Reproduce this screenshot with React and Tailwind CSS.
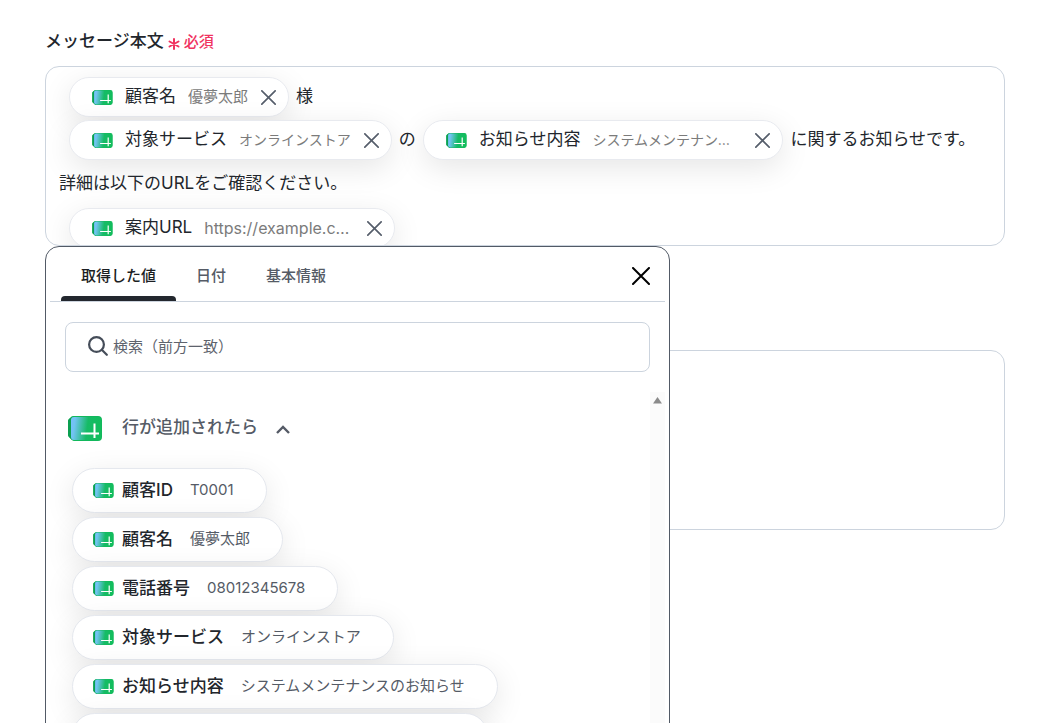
import { useState } from 'react';

const tabs = ['取得した値', '日付', '基本情報'];

const values = [
  { label: '顧客ID', value: 'T0001' },
  { label: '顧客名', value: '優夢太郎' },
  { label: '電話番号', value: '08012345678' },
  { label: '対象サービス', value: 'オンラインストア' },
  { label: 'お知らせ内容', value: 'システムメンテナンスのお知らせ' },
  { label: '案内URL', value: 'https://example.com/support/news' }
];

function SheetIcon({ className }) {
  return (
    <svg viewBox="0 0 34 25" className={`shrink-0 ${className}`} aria-hidden="true">
      <defs>
        <linearGradient id="sheet" x1="0" x2="1" y1="0" y2="0.1">
          <stop offset="0" stopColor="#78c0ff" />
          <stop offset="0.15" stopColor="#70c4f0" />
          <stop offset="0.58" stopColor="#16bb66" />
          <stop offset="1" stopColor="#12bd5c" />
        </linearGradient>
      </defs>
      <path d="M5 0h25a4 4 0 0 1 4 4v17a4 4 0 0 1-4 4H6a3 3 0 0 1-2-1l-3-3a3 3 0 0 1-1-2V5a3 3 0 0 1 1-2l2-2a3 3 0 0 1 2-1z" fill="#12b85c" />
      <path d="M4 1v23l-3-3a3 3 0 0 1-1-2V5a3 3 0 0 1 1-2z" fill="#0b9f50" />
      <path d="M6 1h24a3 3 0 0 1 3 3v17a3 3 0 0 1-3 3H6a3 3 0 0 1-3-3V4a3 3 0 0 1 3-3z" fill="url(#sheet)" />
      <path d="M13 17.5h18M26.500 7.500v14.500" stroke="#fff" strokeWidth="2" fill="none" />
    </svg>
  );
}

function CloseIcon({ className }) {
  return (
    <svg viewBox="0 0 18 18" className={className} fill="none" stroke="currentColor" strokeWidth="2" strokeLinecap="round" aria-hidden="true">
      <path d="M1 1l16 16M17 1L1 17" />
    </svg>
  );
}

function Token({ label, value, size = 'text-[15px]' }) {
  return (
    <span className="inline-flex h-10 shrink-0 items-center rounded-full border border-[#e8eaef] bg-white pr-3 pl-[22px] shadow-[0_8px_30px_rgba(0,0,0,0.1)]">
      <SheetIcon className="mr-3 h-[15px] w-[21px]" />
      <span className="mr-3 text-[17px]">{label}</span>
      <span className={`max-w-[150px] truncate text-[#7b7b7b] ${size}`}>{value}</span>
      <button type="button" aria-label={`${label}を削除`} className="ml-[13px] text-[#565e6b]">
        <CloseIcon className="h-[15px] w-[15px]" />
      </button>
    </span>
  );
}

function ValueChip({ label, value }) {
  return (
    <button
      type="button"
      className="flex h-[45px] items-center rounded-full border border-[#e5e8ee] bg-white pr-8 pl-5 shadow-[0_8px_30px_rgba(0,0,0,0.1)]"
    >
      <SheetIcon className="mr-2 h-[15px] w-[21px]" />
      <span className="mr-[17px] text-[17px] font-medium text-[#22262c]">{label}</span>
      <span className="text-[15px] text-[#555b66]">{value}</span>
    </button>
  );
}

function ValuePicker() {
  const [active, setActive] = useState(tabs[0]);
  const [open, setOpen] = useState(true);

  return (
    <div className="absolute top-full left-0 flex h-[640px] w-[625px] max-w-full flex-col rounded-[14px] border border-[#525a66] bg-white px-1">
      <div className="flex h-[55px] shrink-0 items-stretch border-b border-[#ccd4de] px-[11px]" role="tablist">
        {tabs.map((tab) => (
          <button
            key={tab}
            type="button"
            role="tab"
            aria-selected={tab === active}
            onClick={() => setActive(tab)}
            className={`relative px-5 pt-1 text-[15px] font-medium ${tab === active ? 'text-[#1b1e23]' : 'text-[#555b66]'}`}
          >
            {tab}
            {tab === active ? <span className="absolute inset-x-0 bottom-0 h-[5px] rounded-t-[4px] bg-[#23272e]" /> : null}
          </button>
        ))}
        <button type="button" aria-label="閉じる" className="mt-1 ml-auto px-1 text-black">
          <CloseIcon className="h-[18px] w-[18px]" />
        </button>
      </div>

      <label className="mx-[15px] mt-5 flex h-[50px] shrink-0 items-center rounded-lg border border-[#ccd4de] pl-[22px]">
        <svg viewBox="0 0 20 20" className="mr-[5px] mb-0.5 h-5 w-5 shrink-0" fill="none" stroke="#454d59" strokeWidth="2.200" strokeLinecap="round" aria-hidden="true">
          <circle cx="8.500" cy="8.500" r="7.400" />
          <path d="M14 14l4.800 4.800" />
        </svg>
        <input
          type="text"
          aria-label="検索"
          placeholder="検索（前方一致）"
          className="min-w-0 flex-1 text-[15px] outline-none placeholder:text-[#5e636d]"
        />
      </label>

      <div className="mt-5 flex min-h-0 flex-1">
        <div className="min-w-0 flex-1 overflow-hidden pt-[18px] pl-[18px]">
          <button type="button" onClick={() => setOpen(!open)} className="flex h-9 items-center text-[#555b66]">
            <SheetIcon className="mr-5 h-[25px] w-[34px]" />
            <span className="text-[17px] font-medium">行が追加されたら</span>
            <svg viewBox="0 0 14 9" className={`mt-0.5 ml-[18px] h-[9px] w-[14px] ${open ? '' : 'rotate-180'}`} fill="none" stroke="currentColor" strokeWidth="2.400" aria-hidden="true">
              <path d="M1 8l6-6 6 6" />
            </svg>
          </button>
          {open ? (
            <div className="mt-[22px] flex flex-col items-start gap-1 pl-1">
              {values.map((item) => (
                <ValueChip key={item.label} {...item} />
              ))}
            </div>
          ) : null}
        </div>
        <div className="w-[15px] bg-[#fbfbfb] pt-[5px]" aria-hidden="true">
          <svg viewBox="0 0 9 7" className="mx-auto h-[7px] w-[9px]" fill="#8b8b8b">
            <path d="M4.500 0L9 6.500H0z" />
          </svg>
        </div>
      </div>
    </div>
  );
}

export default function App() {
  return (
    <main className="h-screen overflow-hidden bg-white pt-7 pr-[53px] pl-[45px] font-['Inter','Noto_Sans_CJK_JP',sans-serif] text-[#22262c]">
      <div className="flex h-7 items-center">
        <span id="message-label" className="text-[17px] font-medium">メッセージ本文</span>
        <svg viewBox="0 0 12 12" className="mx-1 mt-1 h-3 w-3" stroke="#f0335f" strokeWidth="2" strokeLinecap="round" aria-hidden="true">
          <path d="M6 1v10M1.500 3.500l9 5M10.500 3.500l-9 5" />
        </svg>
        <span className="text-[15px] font-medium text-[#f0335f]">必須</span>
      </div>

      <div className="relative mt-[10px]">
        <div
          role="textbox"
          aria-multiline="true"
          aria-labelledby="message-label"
          className="flex h-[180px] flex-col gap-[3px] overflow-hidden rounded-[14px] border border-[#ccd4de] px-[13px] pt-[10px] text-[17px] whitespace-nowrap"
        >
          <p className="flex items-center gap-[7px] pl-[10px]">
            <Token label="顧客名" value="優夢太郎" />
            <span>様</span>
          </p>
          <p className="flex items-center gap-[7px] pl-[10px]">
            <Token label="対象サービス" value="オンラインストア" size="text-sm" />
            <span>の</span>
            <Token label="お知らせ内容" value="システムメンテナンスのお知らせ" size="text-sm" />
            <span>に関するお知らせです。</span>
          </p>
          <p className="flex h-[42px] shrink-0 items-center">詳細は以下のURLをご確認ください。</p>
          <p className="flex items-center pl-[10px]">
            <Token label="案内URL" value="https://example.com/support/news" size="text-base" />
          </p>
        </div>
        <ValuePicker />
      </div>

      <textarea
        aria-label="補足メッセージ"
        className="mt-[104px] block h-[180px] w-full resize-none rounded-[14px] border border-[#ccd4de] p-3 text-[17px] outline-none"
      />
    </main>
  );
}
